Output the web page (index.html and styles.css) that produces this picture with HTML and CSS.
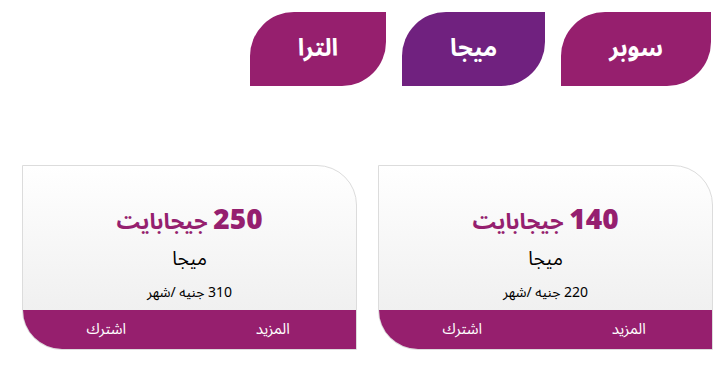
FILE: index.html
```html
<!DOCTYPE html>
<html lang="ar" dir="rtl">
<head>
<meta charset="utf-8">
<title>باقات</title>
<link rel="stylesheet" href="styles.css">
</head>
<body>
<div class="page">
  <nav class="tabs">
    <a class="tab">سوبر</a>
    <a class="tab tab-active">ميجا</a>
    <a class="tab">الترا</a>
  </nav>
  <section class="cards">
    <div class="card">
      <div class="card-body">
        <h2 class="card-title"><span class="num">140</span> جيجابايت</h2>
        <p class="card-name">ميجا</p>
        <p class="card-price">220 جنيه /شهر</p>
      </div>
      <div class="card-actions">
        <a class="action">المزيد</a>
        <a class="action">اشترك</a>
      </div>
    </div>
    <div class="card">
      <div class="card-body">
        <h2 class="card-title"><span class="num">250</span> جيجابايت</h2>
        <p class="card-name">ميجا</p>
        <p class="card-price">310 جنيه /شهر</p>
      </div>
      <div class="card-actions">
        <a class="action">المزيد</a>
        <a class="action">اشترك</a>
      </div>
    </div>
  </section>
</div>
</body>
</html>
```

FILE: styles.css
```css
* { box-sizing: border-box; }
html, body { margin: 0; padding: 0; background: #fff; }
body {
  font-family: "Noto Sans Arabic", "DejaVu Sans", "Noto Sans", sans-serif;
  color: #000;
}
.page { width: 725px; }
.tabs {
  display: flex;
  gap: 16px;
  padding: 12px 14px 0 0;
}
.tab {
  height: 74px;
  padding: 0 48px;
  display: flex;
  align-items: center;
  justify-content: center;
  background: #961f6e;
  color: #fff;
  font-weight: bold;
  font-size: 24px;
  line-height: 30px;
  border-radius: 44px 0 44px 0;
}
.tab-active { background: #70217f; }
.cards {
  display: flex;
  gap: 21px;
  padding: 79px 12px 0 0;
}
.card {
  width: 335px;
  height: 185px;
  border: 1px solid #dcdcdc;
  border-radius: 0 40px 0 40px;
  overflow: hidden;
  display: flex;
  flex-direction: column;
  background: linear-gradient(to bottom, #ffffff, #ececec);
}
.card-body {
  flex: 1;
  display: flex;
  flex-direction: column;
  align-items: center;
  padding-top: 39px;
}
.card-title {
  margin: 0;
  font-size: 22px;
  font-weight: bold;
  color: #951f6f;
  line-height: 26px;
}
.card-title .num {
  font-family: "Open Sans", "Noto Sans", sans-serif;
  font-size: 28px;
  font-weight: 800;
}
.card-name {
  margin: 12px 0 0;
  font-size: 19px;
  line-height: 24px;
}
.card-price {
  margin: 13px 0 0;
  font-size: 14px;
  line-height: 18px;
}
.card-actions {
  height: 39px;
  background: #961f6e;
  display: flex;
}
.action {
  flex: 1;
  display: flex;
  align-items: center;
  justify-content: center;
  color: #fff;
  font-size: 15px;
  padding-bottom: 2px;
}
```
